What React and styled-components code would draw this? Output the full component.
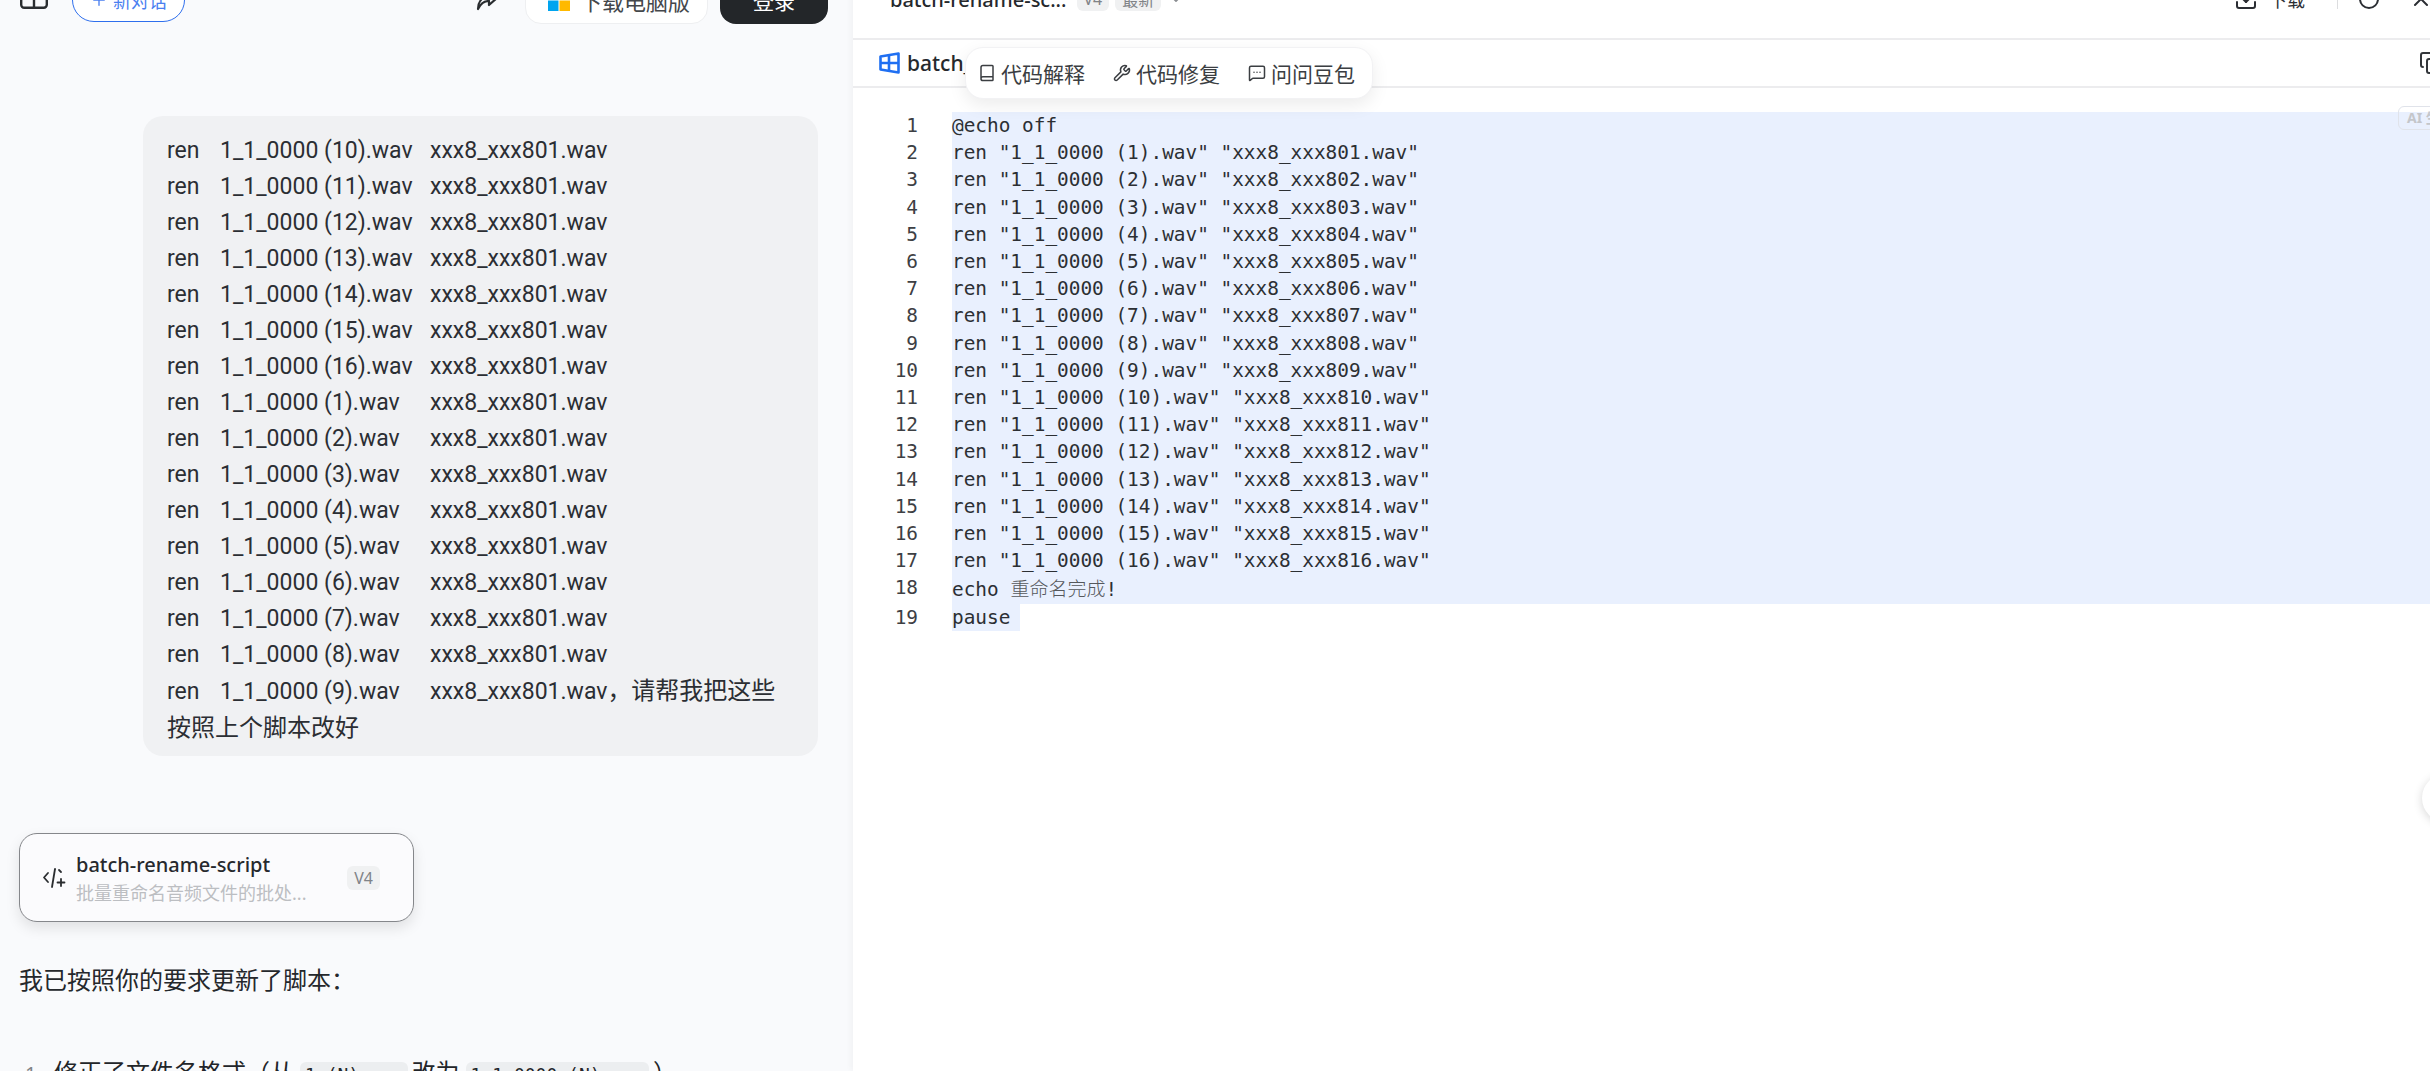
import styled, { createGlobalStyle } from "styled-components"
import { Book, Wrench, MessageSquareMore, Plus, Download, RotateCcw, X, Copy, ChevronDown } from "lucide-react"

const sans = `"Noto Sans", "Noto Sans CJK SC", sans-serif`

const GlobalStyle = createGlobalStyle`
  html, body {
    margin: 0;
    height: 100%;
    overflow: hidden;
    background: #fff;
  }
  * { box-sizing: border-box; }
`

// the page in the shot is scrolled 40px, so the headers are cut by the top edge
const Page = styled.div`
  display: grid;
  grid-template-columns: 853px 1fr;
  height: 1111px;
  margin-top: -40px;
  font-family: ${sans};
  color: #222529;
`
const ChatPanel = styled.section`
  background: #f9fafc;
  overflow: hidden;
`
const TopBar = styled.header`
  display: flex;
  align-items: center;
  height: 80px;
  padding: 0 25px 0 20px;
`
const SideIcon = styled.svg`
  width: 28px;
  height: 22px;
  margin-bottom: 4px;
  margin-right: 24px;
`
const NewChat = styled.button`
  display: flex;
  align-items: center;
  justify-content: center;
  gap: 5px;
  width: 113px;
  height: 44px;
  border: 1px solid #2f6fed;
  border-radius: 22px;
  background: #fff;
  color: #4a7ff0;
  font: 400 18px ${sans};
  padding: 0;
`
const Spacer = styled.div`
  flex: 1;
`
const ShareIcon = styled.svg`
  width: 22px;
  height: 22px;
  margin-right: 27px;
`
const Download_ = styled.button`
  display: flex;
  align-items: center;
  gap: 10px;
  width: 183px;
  height: 48px;
  padding: 0 22px;
  border: 1px solid #eeeff1;
  border-radius: 16px;
  background: #fff;
  color: #44474b;
  font: 400 22px ${sans};
  white-space: nowrap;
`
const WinLogo = styled.svg`
  width: 22px;
  height: 22px;
  flex: none;
`
const Login = styled.button`
  width: 108px;
  height: 48px;
  margin-left: 12px;
  border: 0;
  border-radius: 16px;
  background: #232629;
  color: #fff;
  font: 400 21px ${sans};
`
const Thread = styled.div`
  display: flex;
  flex-direction: column;
  padding: 76px 35px 0 19px;
`
const Bubble = styled.div`
  align-self: flex-end;
  width: 675px;
  padding: 17px 24px 9px;
  background: #f0f1f3;
  border-radius: 20px;
  font-family: Roboto, "Noto Sans CJK SC", sans-serif;
  font-size: 23px;
  line-height: 36px;
  color: #2b2e33;
`
const Cmd = styled.span`
  display: inline-block;
  width: 53px;
`
const Src = styled.span`
  display: inline-block;
  width: 210px;
`
const BubbleZh = styled.span`
  font-size: 24px;
`
const FileCard = styled.div`
  display: flex;
  align-items: center;
  width: 395px;
  height: 89px;
  margin-top: 77px;
  padding: 0 33px 0 22px;
  border: 1px solid #85878b;
  border-radius: 18px;
  background: #fbfbfd;
  box-shadow: 0 6px 14px rgba(0, 0, 0, 0.1);
`
const CardIcon = styled.svg`
  width: 24px;
  height: 24px;
  flex: none;
  margin-right: 10px;
`
const CardText = styled.div`
  flex: 1;
  min-width: 0;
`
const CardTitle = styled.div`
  font-size: 20px;
  line-height: 30px;
  font-weight: 500;
  color: #26292d;
`
const CardDesc = styled.div`
  font-size: 18px;
  line-height: 26px;
  color: #bcbec2;
  white-space: nowrap;
`
const Badge = styled.span`
  display: inline-flex;
  align-items: center;
  justify-content: center;
  height: 24px;
  padding: 0 7px;
  border-radius: 6px;
  background: #f0f1f2;
  color: #808387;
  font-size: 16px;
`
const Para = styled.p`
  margin: 40px 0 0;
  font-size: 24px;
  line-height: 36px;
  color: #25282c;
`
const Steps = styled.div`
  display: flex;
  align-items: baseline;
  margin-top: 56px;
  padding-left: 6px;
  font-size: 24px;
  line-height: 36px;
  white-space: nowrap;
`
const StepNo = styled.span`
  width: 29px;
  color: #808387;
  font-size: 20px;
`
const InlineCode = styled.code`
  margin: 0 4px 0 6px;
  padding: 2px 5px;
  border-radius: 6px;
  background: #eceef0;
  font: 400 18px "DejaVu Sans Mono", monospace;
`

const ArtifactPanel = styled.section`
  position: relative;
  overflow: hidden;
  background: #fff;
  box-shadow: -2px 0 6px rgba(0, 0, 0, 0.04);
`
const ArtifactHead = styled.header`
  display: flex;
  align-items: center;
  gap: 6px;
  height: 80px;
  padding: 0 0 0 37px;
  border-bottom: 2px solid #ececee;
`
const FileName = styled.span`
  font-size: 20px;
  font-weight: 500;
  margin-right: 4px;
  color: #26292d;
`
const HeadAction = styled.span`
  display: flex;
  align-items: center;
  gap: 11px;
  font-size: 18px;
  color: #2b2e33;
`
const Divider = styled.span`
  width: 1px;
  height: 20px;
  margin: 0 13px 0 26px;
  background: #dcdddf;
`
const CloseBtn = styled.span`
  display: flex;
  margin: 0 -3px 0 22px;
`
const TabRow = styled.div`
  display: flex;
  align-items: center;
  justify-content: space-between;
  height: 48px;
  padding: 0 0 0 26px;
  border-bottom: 2px solid #ececee;
  overflow: hidden;
`
const Tab = styled.div`
  display: flex;
  align-items: center;
  gap: 7px;
  font-size: 21px;
  font-weight: 500;
  color: #26292d;
`
const TabIcon = styled.svg`
  width: 21px;
  height: 22px;
`
const CopyBtn = styled.span`
  display: flex;
  margin-right: -13px;
  color: #33363a;
`
const Popover = styled.div`
  position: absolute;
  left: 112px;
  top: 87px;
  display: flex;
  align-items: center;
  gap: 28px;
  width: 408px;
  height: 52px;
  padding: 0 19px 0 12px;
  border-radius: 18px;
  background: #fff;
  border: 1px solid #f2f2f4;
  box-shadow: 0 6px 18px rgba(0, 0, 0, 0.08);
`
const PopItem = styled.span`
  display: flex;
  align-items: center;
  gap: 5px;
  font-size: 21px;
  color: #3b3e42;
  white-space: nowrap;
`
const Editor = styled.div`
  padding-top: 24px;
  font: 400 19.4px/27.2px "DejaVu Sans Mono", monospace;
  color: #2c2f33;
`
const CodeRow = styled.div`
  display: flex;
  white-space: pre;
`
const LineNo = styled.span`
  width: 99px;
  flex: none;
  padding-right: 34px;
  text-align: right;
  color: #3d4044;
`
const CodeText = styled.span`
  flex: ${(p) => (p.$short ? "none" : 1)};
  background: #e9f0fe;
  padding-right: ${(p) => (p.$short ? 10 : 0)}px;
`
const Zh = styled.span`
  font-family: "Noto Sans CJK SC", sans-serif;
  font-weight: 300;
  font-size: 19px;
  color: #55585c;
`
const AiTag = styled.span`
  position: absolute;
  left: 1545px;
  top: 146px;
  width: 60px;
  height: 24px;
  padding-left: 8px;
  border: 1px solid #e0e3ea;
  border-radius: 6px;
  color: #c4c6ca;
  font-size: 14px;
  font-weight: 700;
  line-height: 22px;
  white-space: nowrap;
`
const FloatBtn = styled.span`
  position: absolute;
  left: 1569px;
  top: 814px;
  width: 48px;
  height: 48px;
  border-radius: 50%;
  background: #fff;
  box-shadow: 0 2px 10px rgba(0, 0, 0, 0.16);
`

const userFiles = [10, 11, 12, 13, 14, 15, 16, 1, 2, 3, 4, 5, 6, 7, 8, 9]
const scriptFiles = [1, 2, 3, 4, 5, 6, 7, 8, 9, 10, 11, 12, 13, 14, 15, 16]

const codeLines = [
  "@echo off",
  ...scriptFiles.map((n) => `ren "1_1_0000 (${n}).wav" "xxx8_xxx${800 + n}.wav"`),
]

const App = () => {
  return (
    <>
      <GlobalStyle />
      <Page>
        <ChatPanel>
          <TopBar>
            <SideIcon viewBox="0 0 28 22" fill="none" stroke="#2a2d30" strokeWidth="2.4">
              <rect x="1.2" y="1.2" width="25.6" height="19.6" rx="3" />
              <path d="M14 6v15M1 8h26" />
            </SideIcon>
            <NewChat>
              <Plus size={18} strokeWidth={1.8} />
              新对话
            </NewChat>
            <Spacer />
            <ShareIcon viewBox="0 0 22 22" fill="none" stroke="#2a2d30" strokeWidth="2.2" strokeLinejoin="round" strokeLinecap="round">
              <path d="M13 2l8 7-8 7v-4C8 12 5 14 2 20c0-6 3-12 11-13V2z" />
            </ShareIcon>
            <Download_>
              <WinLogo viewBox="0 0 22 22">
                <rect x="0" y="0" width="10.5" height="10.5" fill="#f25022" />
                <rect x="11.5" y="0" width="10.5" height="10.5" fill="#7fba00" />
                <rect x="0" y="11.5" width="10.5" height="10.5" fill="#00a4ef" />
                <rect x="11.5" y="11.5" width="10.5" height="10.5" fill="#ffb900" />
              </WinLogo>
              下载电脑版
            </Download_>
            <Login>登录</Login>
          </TopBar>
          <Thread>
            <Bubble>
              {userFiles.map((n, i) => (
                <div key={n}>
                  <Cmd>ren</Cmd>
                  <Src>1_1_0000 ({n}).wav</Src>
                  xxx8_xxx801.wav
                  {i === userFiles.length - 1 && <BubbleZh>，请帮我把这些按照上个脚本改好</BubbleZh>}
                </div>
              ))}
            </Bubble>
            <FileCard>
              <CardIcon viewBox="0 0 24 24" fill="none" stroke="#2a2d30" strokeWidth="1.8" strokeLinecap="round" strokeLinejoin="round">
                <path d="M6 7l-4 4.5L6 16" />
                <path d="M13 3L10 21" />
                <path d="M17 4l2 2" />
                <path d="M19 13v7M15.5 16.5h7" />
              </CardIcon>
              <CardText>
                <CardTitle>batch-rename-script</CardTitle>
                <CardDesc>批量重命名音频文件的批处...</CardDesc>
              </CardText>
              <Badge>V4</Badge>
            </FileCard>
            <Para>我已按照你的要求更新了脚本：</Para>
            <Steps>
              <StepNo>1.</StepNo>
              修正了文件名格式（从<InlineCode>1_(N).wav</InlineCode>改为<InlineCode>1_1_0000_(N).wav</InlineCode>）
            </Steps>
          </Thread>
        </ChatPanel>

        <ArtifactPanel>
          <ArtifactHead>
            <FileName>batch-rename-sc...</FileName>
            <Badge>V4</Badge>
            <Badge>最新</Badge>
            <ChevronDown size={18} color="#8a8d91" />
            <Spacer />
            <HeadAction>
              <Download size={24} />
              下载
            </HeadAction>
            <Divider />
            <RotateCcw size={24} color="#2b2e33" />
            <CloseBtn>
              <X size={24} color="#2b2e33" />
            </CloseBtn>
          </ArtifactHead>
          <TabRow>
            <Tab>
              <TabIcon viewBox="0 0 21 22" fill="none" stroke="#1f6ff2" strokeWidth="2.6" strokeLinejoin="round">
                <path d="M1.5 4.5L19.5 1.5V20.5L1.5 17.5V4.5Z" />
                <path d="M1.5 11H19.5M10 3v16" />
              </TabIcon>
              batch_rename.bat
            </Tab>
            <CopyBtn>
              <Copy size={24} />
            </CopyBtn>
          </TabRow>
          <Popover>
            <PopItem>
              <Book size={18} />
              代码解释
            </PopItem>
            <PopItem>
              <Wrench size={18} />
              代码修复
            </PopItem>
            <PopItem>
              <MessageSquareMore size={18} />
              问问豆包
            </PopItem>
          </Popover>
          <Editor>
            {codeLines.map((line, i) => (
              <CodeRow key={line}>
                <LineNo>{i + 1}</LineNo>
                <CodeText>{line}</CodeText>
              </CodeRow>
            ))}
            <CodeRow>
              <LineNo>18</LineNo>
              <CodeText>
                echo <Zh>重命名完成</Zh>!
              </CodeText>
            </CodeRow>
            <CodeRow>
              <LineNo>19</LineNo>
              <CodeText $short>pause</CodeText>
            </CodeRow>
          </Editor>
          <AiTag>AI 生成</AiTag>
          <FloatBtn />
        </ArtifactPanel>
      </Page>
    </>
  )
}

export default App
